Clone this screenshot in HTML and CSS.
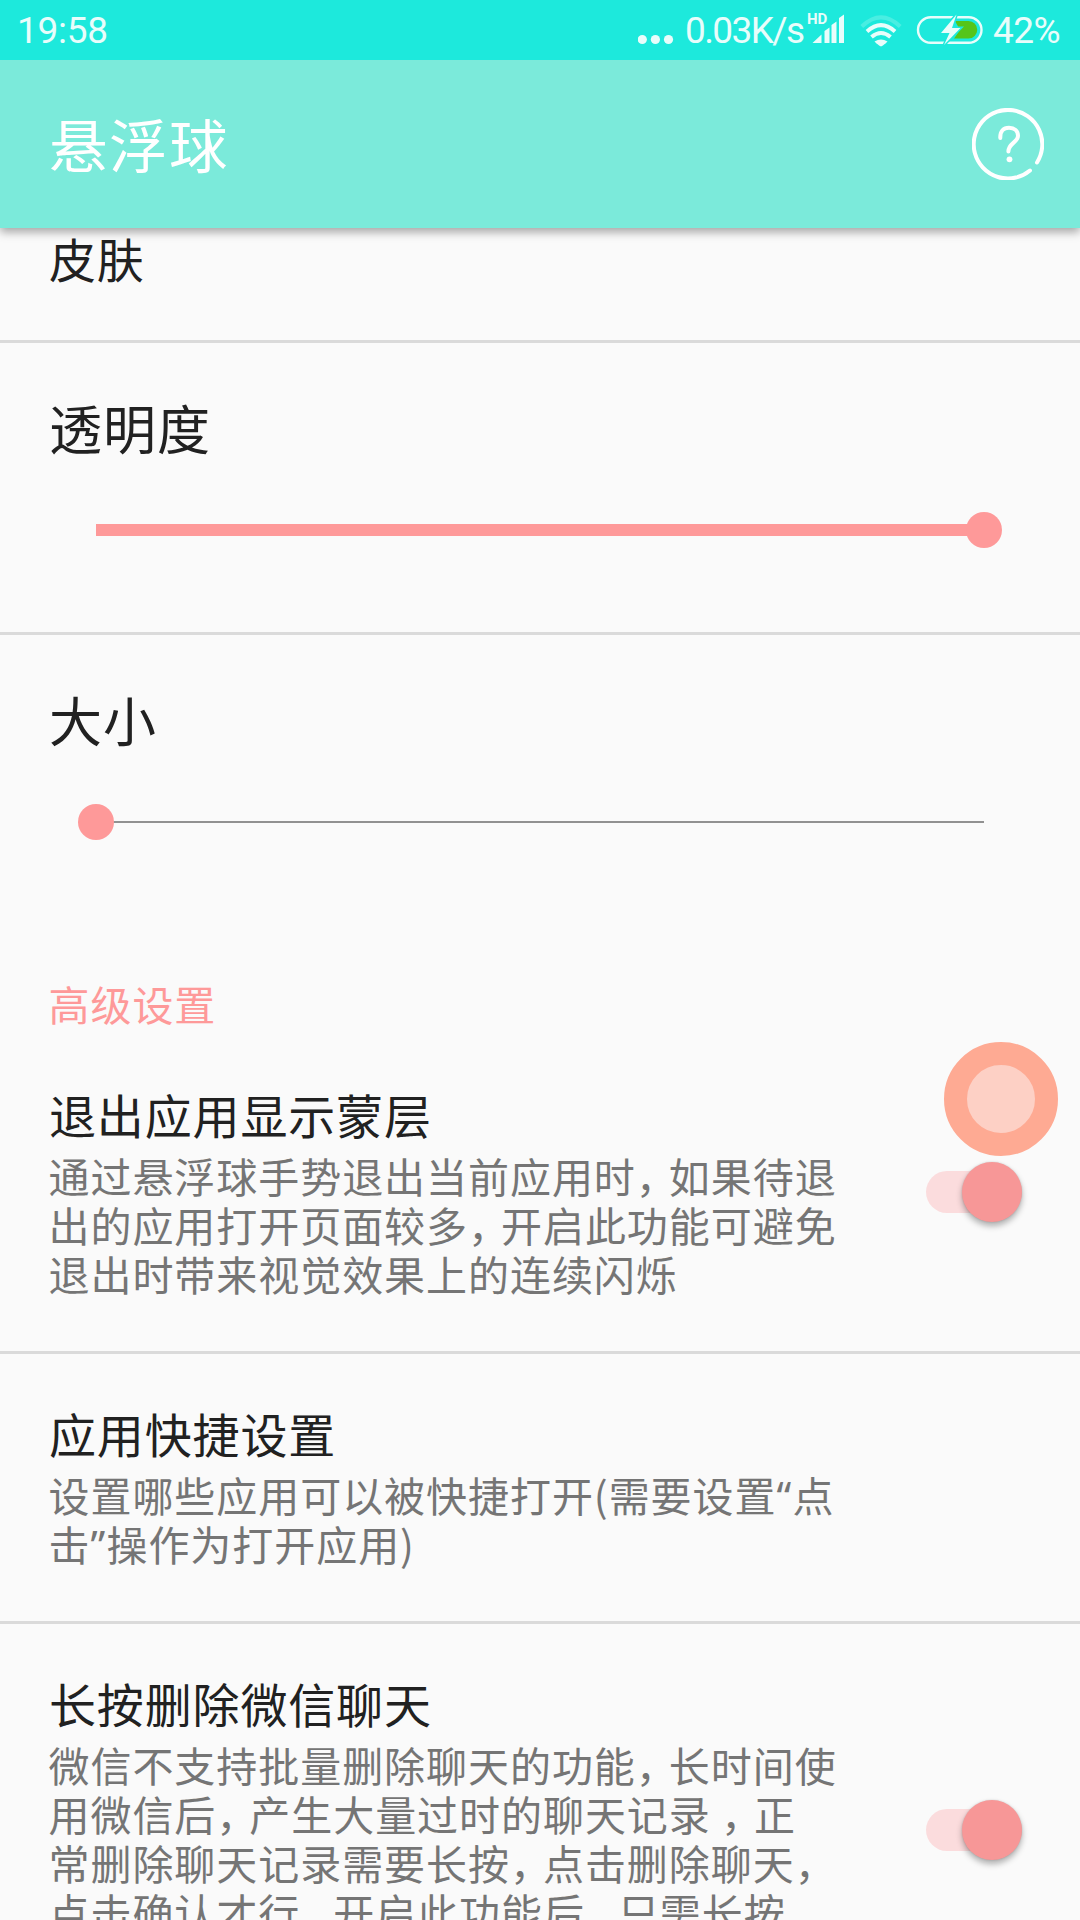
FILE: index.html
```html
<!DOCTYPE html>
<html lang="zh-CN">
<head>
  <meta charset="UTF-8">
  <meta name="viewport" content="width=device-width, initial-scale=1.0">
  <title>悬浮球</title>
  <link rel="stylesheet" href="styles.css">
</head>
<body>
    <div class="status-bar">
        <span class="clock">19:58</span>
        <svg class="dots" width="36" height="60" viewBox="638 0 36 60">
            <circle cx="642.3" cy="39.5" r="4.6"/>
            <circle cx="655.4" cy="39.5" r="4.6"/>
            <circle cx="668.5" cy="39.5" r="4.6"/>
        </svg>
        <span class="speed">0.03K/s</span>
        <svg class="signal" width="38" height="60" viewBox="807 0 38 60">
            <text class="hd" x="807" y="24">HD</text>
            <path d="M812.5 43l9-8.5V43zM824.5 43V31l5-3.5V43zM831.5 43V25l5-3.5V43zM839 43V18l5-3.5V43z"/>
        </svg>
        <svg class="wifi" width="42" height="60" viewBox="860 0 42 60">
            <path class="arc faded" d="M861.8 26.5q19.2-18.2 38.4 0"/>
            <path class="arc" d="M867 31.5q14-12.6 28 0"/>
            <path class="arc" d="M871.5 37q9.5-8 19 0"/>
            <path d="M874.5 41.5q6.5-4 13 0q-1 1.500-5 4.200q-1.500 1-3 0q-4-2.700-5-4.200z"/>
        </svg>
        <svg class="battery" width="67" height="60" viewBox="916 0 67 60">
            <rect class="shell" x="918" y="17.2" width="63.5" height="25.6" rx="12.8"/>
            <path class="level" d="M955 21h13.500a8.700 8.700 0 0 1 0 17.500H954l6-8.500z"/>
            <path class="bolt" d="M956.5 14.500L941 33h8.500L944 45l16.500-17H952z"/>
        </svg>
        <span class="percent">42%</span>
    </div>

    <header class="app-bar">
        <h1>悬浮球</h1>
        <svg class="help" width="72" height="72" viewBox="972 108 72 72">
            <path d="M1037 162.5A34.300 34.300 0 1 0 1030 170.500"/>
            <path d="M1000.3 138C1000 131 1003.500 127.800 1009 127.800C1014.500 127.800 1018 131 1018 135.800C1018 142.500 1008.400 143 1008.400 151.500"/>
            <circle cx="1009.5" cy="159.3" r="2.9"/>
        </svg>
    </header>

    <main>
        <section class="item skin">
            <h2>皮肤</h2>
        </section>

        <section class="item slider-item">
            <h2>透明度</h2>
            <div class="slider full">
                <span class="thumb"></span>
            </div>
        </section>

        <section class="item slider-item last">
            <h2>大小</h2>
            <div class="slider empty">
                <span class="thumb"></span>
            </div>
        </section>

        <h3 class="category">高级设置</h3>

        <section class="item">
            <div class="text">
                <h2>退出应用显示蒙层</h2>
                <p>通过悬浮球手势退出当前应用时<span class="comma">，</span>如果待退<br>出的应用打开页面较多<span class="comma">，</span>开启此功能可避免<br>退出时带来视觉效果上的连续闪烁</p>
            </div>
            <div class="switch"><span class="knob"></span></div>
        </section>

        <section class="item">
            <div class="text">
                <h2>应用快捷设置</h2>
                <p>设置哪些应用可以被快捷打开(需要设置<span class="quote">“</span>点<br>击<span class="quote">”</span>操作为打开应用)</p>
            </div>
        </section>

        <section class="item tall last">
            <div class="text">
                <h2>长按删除微信聊天</h2>
                <p>微信不支持批量删除聊天的功能<span class="comma">，</span>长时间使<br>用微信后<span class="comma">，</span>产生大量过时的聊天记录 <span class="comma">，</span>正<br>常删除聊天记录需要长按<span class="comma">，</span>点击删除聊天<span class="comma">，</span><br>点击确认才行<span class="comma">，</span>开启此功能后<span class="comma">，</span>只需长按</p>
            </div>
            <div class="switch"><span class="knob"></span></div>
        </section>
    </main>

    <div class="float-ball"></div>
</body>
</html>
```
FILE: styles.css
```css
* {
    box-sizing: border-box;
}

body {
    margin: 0;
    height: 1920px;
    overflow: hidden;
    position: relative;
    display: flex;
    flex-direction: column;
    background-color: #fafafa;
    color: #212121;
    font-family: "Noto Sans CJK SC", sans-serif;
}

h1, h2, h3, p {
    margin: 0;
    font-weight: 400;
    white-space: nowrap;
}

/* Status bar */
.status-bar {
    flex: none;
    height: 60px;
    padding: 0 17px;
    display: flex;
    align-items: center;
    background-color: #1de9dc;
    color: #e8fdfb;
    fill: #e8fdfb;
    font-family: Roboto, sans-serif;
    font-size: 37px;
    line-height: 60px;
    white-space: nowrap;
    z-index: 2;
}

.clock,
.speed,
.percent {
    padding-top: 2px;
}

.clock {
    letter-spacing: -0.3px;
    margin-right: auto;
}

.dots {
    margin-right: 11px;
}

.speed {
    width: 122px;
    letter-spacing: -1.6px;
}

.hd {
    font-size: 15px;
    font-weight: 700;
}

.wifi {
    margin-left: 15px;
}

.arc {
    fill: none;
    stroke: #e8fdfb;
    stroke-width: 4;
}

.faded {
    opacity: 0.22;
}

.battery {
    margin: 0 10px 0 14px;
}

.shell {
    fill: none;
    stroke: #e8fdfb;
    stroke-width: 2.4;
}

.level {
    fill: #55c51a;
}

.bolt {
    stroke: #1de9dc;
    stroke-width: 3;
    paint-order: stroke;
}

.percent {
    width: 70px;
    letter-spacing: -0.6px;
}

/* App bar */
.app-bar {
    flex: none;
    height: 168px;
    padding: 0 36px 0 48px;
    display: flex;
    align-items: center;
    justify-content: space-between;
    background-color: #7beada;
    box-shadow: 0 4px 9px rgba(0, 0, 0, 0.35);
    z-index: 1;
}

.app-bar h1 {
    color: #ffffff;
    font-size: 58.5px;
    letter-spacing: 1.5px;
    line-height: 72px;
    padding: 0 0 3px 1px;
}

.help {
    fill: none;
    stroke: #ffffff;
    stroke-width: 4;
    stroke-linecap: round;
}

.help circle {
    fill: #ffffff;
    stroke: none;
}

/* Settings list */
.item {
    display: flex;
    align-items: center;
    justify-content: space-between;
    padding: 51px 54px 53px 48px;
    border-bottom: 3px solid #dadada;
}

.item.last {
    border-bottom: none;
}

.item h2 {
    font-size: 47px;
    letter-spacing: 0.85px;
    line-height: 56px;
    padding-left: 1px;
}

.item p {
    margin-top: 9px;
    padding-left: 0.5px;
    color: #757575;
    font-size: 41px;
    letter-spacing: 0.95px;
    line-height: 49px;
}

.skin {
    height: 115px;
    padding-top: 2px;
    align-items: flex-start;
}

.tall {
    height: 414px;
    align-items: flex-start;
}

.tall .switch {
    align-self: center;
}

.comma {
    letter-spacing: -8px;
}

.quote {
    display: inline-block;
    width: 16px;
    font-family: "Noto Sans", sans-serif;
    line-height: 1;
}

.category {
    padding: 54px 48px 7px 48.5px;
    color: #fe9999;
    font-size: 41px;
    letter-spacing: 0.95px;
    line-height: 50px;
}

/* Sliders */
.slider-item {
    height: 292px;
    padding: 52px 96px 0 48px;
    flex-direction: column;
    align-items: stretch;
    justify-content: flex-start;
}

.slider-item.last {
    height: 289px;
}

.slider-item h2 {
    font-size: 53px;
    letter-spacing: 1px;
    line-height: 64px;
}

.slider {
    height: 36px;
    margin: 53px 0 0 48px;
    display: flex;
    align-items: center;
    background: linear-gradient(#fe9999, #fe9999) center / 100% 12px no-repeat;
}

.slider.full {
    justify-content: flex-end;
}

.slider.empty {
    background: linear-gradient(#919191, #919191) center / 100% 2px no-repeat;
}

.thumb {
    width: 36px;
    height: 36px;
    border-radius: 50%;
    background-color: #fe9999;
}

.full .thumb {
    margin-right: -18px;
}

.empty .thumb {
    margin-left: -18px;
}

/* Switches */
.switch {
    width: 96px;
    height: 42px;
    margin-right: 4px;
    display: flex;
    align-items: center;
    justify-content: flex-end;
    border-radius: 21px;
    background-color: #fbdcdd;
}

.knob {
    width: 60px;
    height: 60px;
    border-radius: 50%;
    background-color: #f79797;
    box-shadow: 0 4px 6px rgba(0, 0, 0, 0.3), 0 0 2px rgba(0, 0, 0, 0.15);
}

/* Floating ball, drawn over the list */
.float-ball {
    position: absolute;
    top: 1042px;
    left: 944px;
    width: 114px;
    height: 114px;
    border: 23px solid #feaa93;
    border-radius: 50%;
    background-color: #fdd0c5;
}
```
